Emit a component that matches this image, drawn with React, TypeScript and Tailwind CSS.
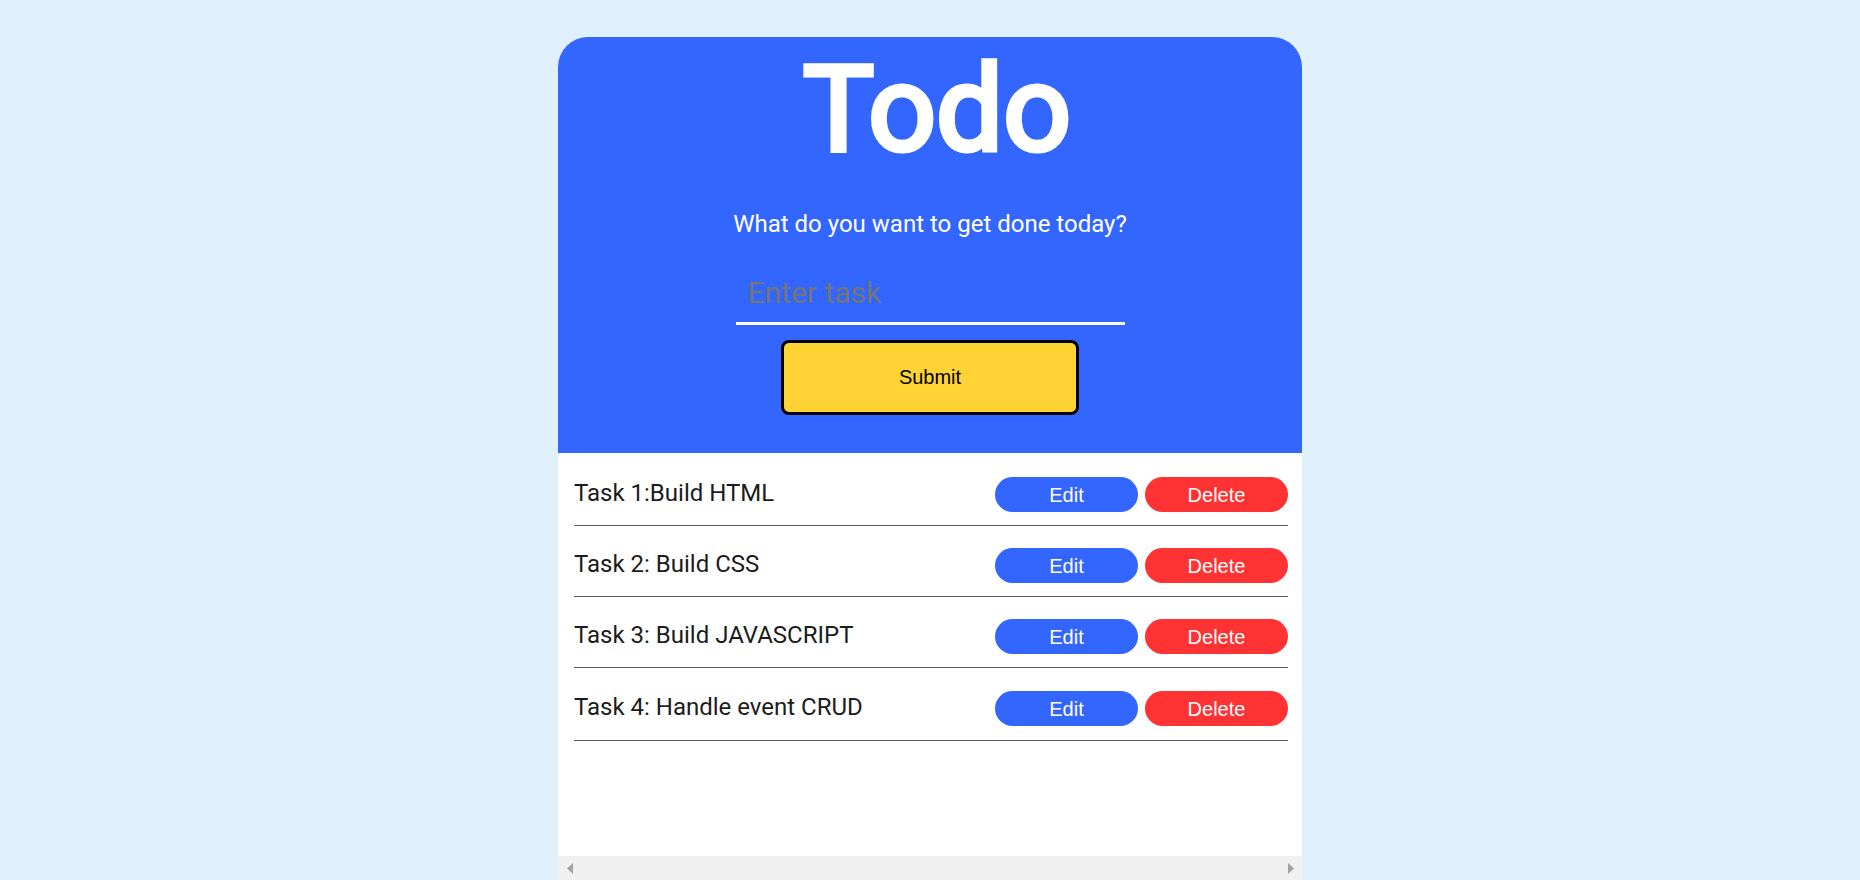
import React, { useState } from 'react';

const initialTasks = [
  'Task 1:Build HTML',
  'Task 2: Build CSS',
  'Task 3: Build JAVASCRIPT',
  'Task 4: Handle event CRUD',
];

const App = () => {
  const [tasks] = useState(initialTasks);
  const [value, setValue] = useState('');

  return (
    <div className="h-screen overflow-hidden bg-[#dfeffc] flex justify-center pt-[37px] font-['Roboto',sans-serif]">
      <div className="w-[744px] h-[843px] flex flex-col bg-white rounded-t-[30px] overflow-hidden">
        <header className="h-[416px] shrink-0 bg-[#3366ff] flex flex-col items-center">
          {/* only regular/bold Roboto available, stroke gives the semibold look */}
          <h1 className="mt-[3px] pl-[14px] text-[119px] leading-[normal] text-white [-webkit-text-stroke:5px_white]">
            Todo
          </h1>
          <p className="mt-[31px] text-[24px] leading-[normal] text-white">
            What do you want to get done today?
          </p>
          <input
            value={value}
            onChange={(e) => setValue(e.target.value)}
            placeholder="Enter task"
            className="mt-[24px] w-[389px] h-[63px] px-3 bg-transparent border-b-[3px] border-white text-[30px] text-white placeholder:text-[#757575] outline-none"
          />
          <button className="mt-[15px] w-[298px] h-[75px] pb-[2px] bg-[#ffd333] border-[3px] border-black rounded-[8px] text-[20px] text-black font-['Liberation_Sans',Arial,sans-serif]">
            Submit
          </button>
        </header>

        {/* Task list */}
        <ul className="flex-1 pt-[2px] pl-4 pr-[14px]">
          {tasks.map((task) => (
            <li
              key={task}
              className="flex justify-between items-center pt-[22px] pb-[13px] border-b border-[#5e5e5e] last:pt-[23px] last:pb-[14px]"
            >
              <span className="text-[24px] leading-[normal] text-[#1c1c1c] -mt-[3px]">{task}</span>
              <div className="flex gap-[7px]">
                <button className="w-[143px] h-[35px] rounded-full bg-[#3366ff] text-white text-[20px] font-['Liberation_Sans',Arial,sans-serif]">
                  Edit
                </button>
                <button className="w-[143px] h-[35px] rounded-full bg-[#ff3333] text-white text-[20px] font-['Liberation_Sans',Arial,sans-serif]">
                  Delete
                </button>
              </div>
            </li>
          ))}
        </ul>

        {/* horizontal scrollbar */}
        <div className="h-[24px] shrink-0 bg-[#f0f0f0] flex justify-between items-center pl-[9px] pr-[8px]">
          <svg width="6" height="11" viewBox="0 0 6 11">
            <polygon points="6,0 6,11 0,5.5" fill="#a3a3a3" />
          </svg>
          <svg width="6" height="11" viewBox="0 0 6 11">
            <polygon points="0,0 0,11 6,5.5" fill="#a3a3a3" />
          </svg>
        </div>
      </div>
    </div>
  );
};

export default App;
